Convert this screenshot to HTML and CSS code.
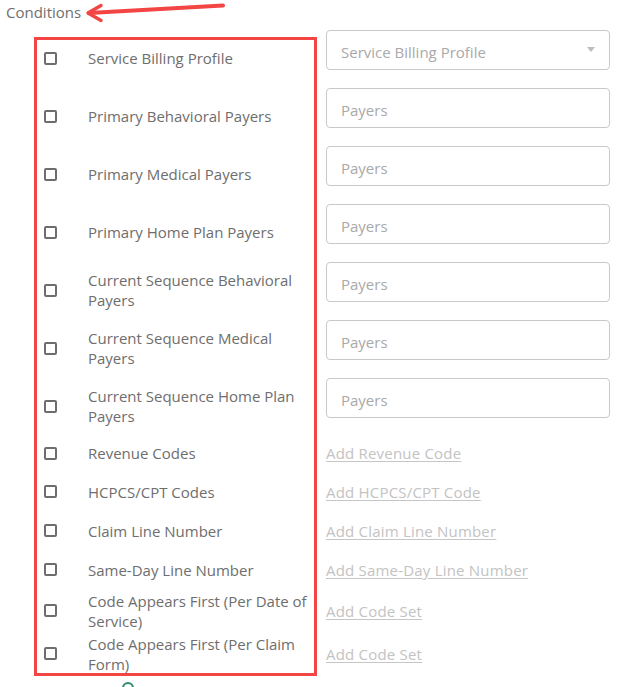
FILE: index.html
```html
<!DOCTYPE html>
<html>
<head>
<meta charset="utf-8">
<link rel="stylesheet" href="styles.css">
</head>
<body>
<div class="page">
  <div class="title">Conditions</div>
  <div class="rows">
    <div class="row row--input">
      <div class="cond"><span class="check"></span><span class="label">Service Billing Profile</span></div>
      <div class="field field--select"><span class="ph">Service Billing Profile</span><span class="caret"></span></div>
    </div>
    <div class="row row--input">
      <div class="cond"><span class="check"></span><span class="label">Primary Behavioral Payers</span></div>
      <div class="field"><span class="ph">Payers</span></div>
    </div>
    <div class="row row--input">
      <div class="cond"><span class="check"></span><span class="label">Primary Medical Payers</span></div>
      <div class="field"><span class="ph">Payers</span></div>
    </div>
    <div class="row row--input">
      <div class="cond"><span class="check"></span><span class="label">Primary Home Plan Payers</span></div>
      <div class="field"><span class="ph">Payers</span></div>
    </div>
    <div class="row row--input">
      <div class="cond"><span class="check"></span><span class="label">Current Sequence Behavioral Payers</span></div>
      <div class="field"><span class="ph">Payers</span></div>
    </div>
    <div class="row row--input">
      <div class="cond"><span class="check"></span><span class="label">Current Sequence Medical Payers</span></div>
      <div class="field"><span class="ph">Payers</span></div>
    </div>
    <div class="row row--input">
      <div class="cond"><span class="check"></span><span class="label">Current Sequence Home Plan Payers</span></div>
      <div class="field"><span class="ph">Payers</span></div>
    </div>
    <div class="row row--link row--first-link">
      <div class="cond"><span class="check"></span><span class="label">Revenue Codes</span></div>
      <a class="add">Add Revenue Code</a>
    </div>
    <div class="row row--link">
      <div class="cond"><span class="check"></span><span class="label">HCPCS/CPT Codes</span></div>
      <a class="add">Add HCPCS/CPT Code</a>
    </div>
    <div class="row row--link">
      <div class="cond"><span class="check"></span><span class="label">Claim Line Number</span></div>
      <a class="add">Add Claim Line Number</a>
    </div>
    <div class="row row--link">
      <div class="cond"><span class="check"></span><span class="label">Same-Day Line Number</span></div>
      <a class="add">Add Same-Day Line Number</a>
    </div>
    <div class="row row--link">
      <div class="cond"><span class="check"></span><span class="label">Code Appears First (Per Date of Service)</span></div>
      <a class="add">Add Code Set</a>
    </div>
    <div class="row row--link">
      <div class="cond"><span class="check"></span><span class="label">Code Appears First (Per Claim Form)</span></div>
      <a class="add">Add Code Set</a>
    </div>
  </div>
  <div class="more"><span class="dot"></span></div>

  <div class="highlight"></div>
  <svg class="arrow" width="240" height="26" viewBox="0 0 240 26">
    <path d="M223 5.5 L89 13" fill="none" stroke="#f44545" stroke-width="4" stroke-linecap="round"/>
    <path d="M101 5.5 L88 13 L101 20.5" fill="none" stroke="#f44545" stroke-width="3.5" stroke-linecap="round" stroke-linejoin="round"/>
  </svg>
</div>
</body>
</html>
```

FILE: styles.css
```css
html, body {
  margin: 0;
  padding: 0;
  background: #fff;
}

.page {
  position: relative;
  width: 617px;
  height: 687px;
  overflow: hidden;
  font-family: "Open Sans", "Noto Sans", sans-serif;
  font-size: 15px;
  line-height: 20px;
  color: #6b6b6b;
}

.title {
  padding: 2px 0 0 6px;
  height: 20px;
  color: #6e6e6e;
}

.rows {
  display: flex;
  flex-direction: column;
  padding: 8px 7px 0 44px;
}

.row {
  display: grid;
  grid-template-columns: 266px 284px;
  column-gap: 16px;
}

.row--input {
  height: 58px;
  align-items: start;
}

.row--link {
  min-height: 39px;
  padding: 1.5px 0;
  box-sizing: border-box;
  align-items: center;
}

.row--first-link {
  margin-top: -2px;
  min-height: 38px;
}

.cond {
  display: grid;
  grid-template-columns: 44px 1fr;
  align-items: center;
  min-height: 40px;
}

.row--input .cond {
  margin-top: 8px;
}

.row--link .cond {
  min-height: 20px;
}

.check {
  width: 13px;
  height: 13px;
  box-sizing: border-box;
  border: 2px solid #6d6d6d;
  border-radius: 2px;
}

.label {
  color: #6e6e6e;
}

.field {
  height: 40px;
  box-sizing: border-box;
  border: 1px solid #c9c9c9;
  border-radius: 4px;
  display: flex;
  align-items: center;
  justify-content: space-between;
  padding: 3px 14px 0;
}

.ph {
  color: #a9a9a9;
}

.caret {
  width: 0;
  height: 0;
  border-left: 4.5px solid transparent;
  border-right: 4.5px solid transparent;
  border-top: 5px solid #bdbdbd;
  margin-top: -4px;
}

.add {
  color: #c3c3c3;
  letter-spacing: 0.2px;
  text-decoration: underline;
  text-underline-offset: 2px;
  text-decoration-color: #c6c6c6;
}

.more {
  padding: 7px 0 0 122px;
}

.dot {
  display: block;
  width: 12px;
  height: 12px;
  border-radius: 50%;
  border: 2px solid #2e8b6e;
  box-sizing: border-box;
}

.highlight {
  position: absolute;
  left: 34px;
  top: 37px;
  width: 283px;
  height: 639px;
  box-sizing: border-box;
  border: 3px solid #f44545;
  pointer-events: none;
}

.arrow {
  position: absolute;
  left: 0;
  top: 0;
}
```
